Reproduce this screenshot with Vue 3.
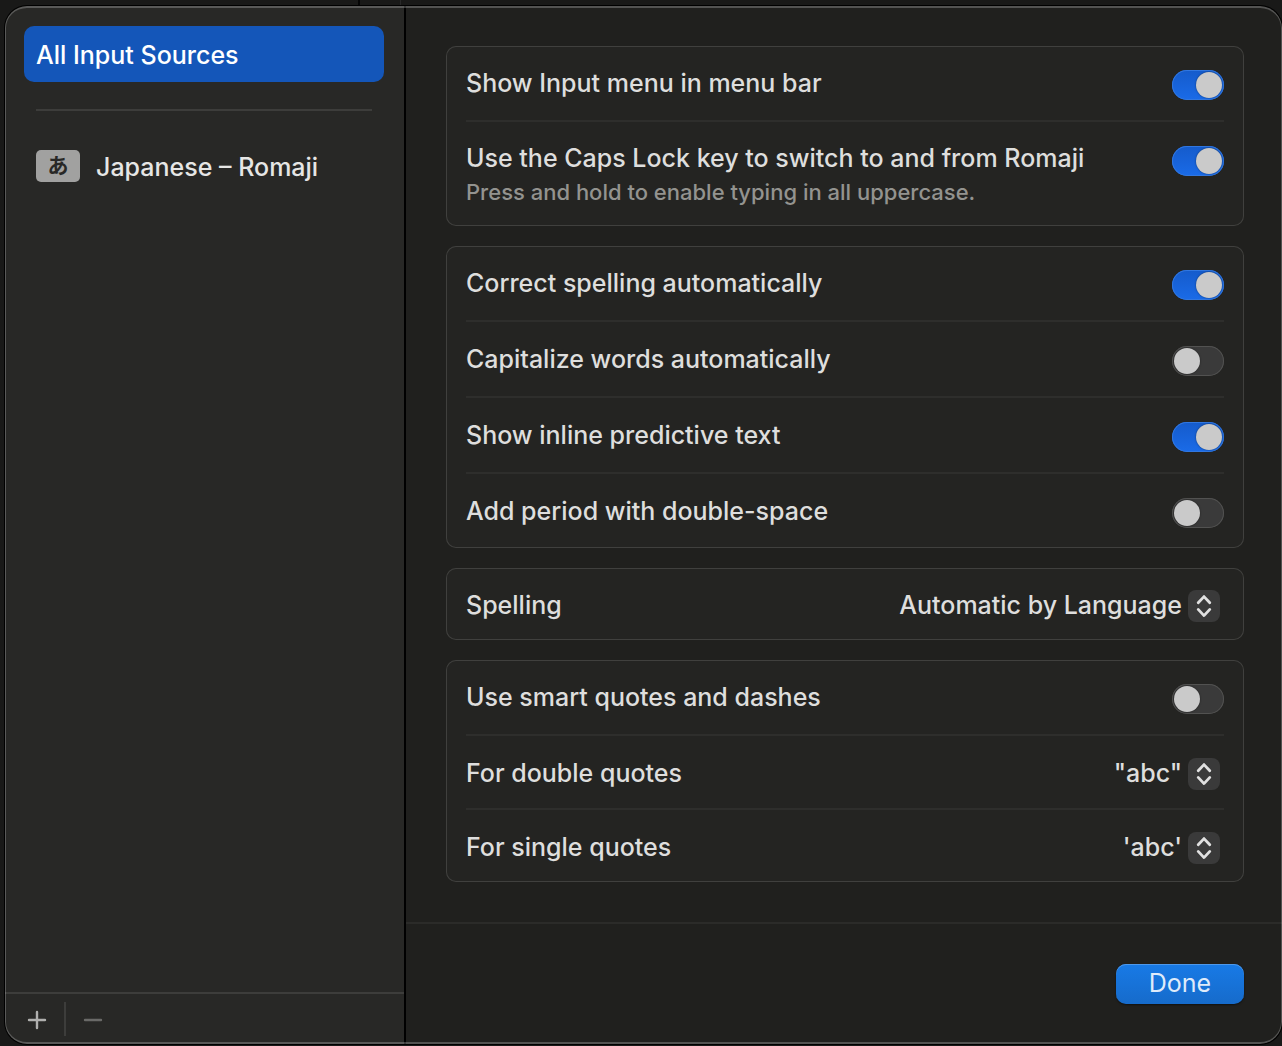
<script setup>
import { reactive } from 'vue'

const sections = reactive([
  [
    { id: 'input-menu', label: 'Show Input menu in menu bar', on: true },
    {
      id: 'caps-lock',
      label: 'Use the Caps Lock key to switch to and from Romaji',
      note: 'Press and hold to enable typing in all uppercase.',
      on: true,
    },
  ],
  [
    { id: 'correct', label: 'Correct spelling automatically', on: true },
    { id: 'capitalize', label: 'Capitalize words automatically', on: false },
    { id: 'predictive', label: 'Show inline predictive text', on: true },
    { id: 'period', label: 'Add period with double-space', on: false },
  ],
  [{ id: 'spelling', label: 'Spelling', value: 'Automatic by Language' }],
  [
    { id: 'smart', label: 'Use smart quotes and dashes', on: false },
    { id: 'double', label: 'For double quotes', value: '"abc"' },
    { id: 'single', label: 'For single quotes', value: "'abc'" },
  ],
])
</script>

<template>
  <div class="desktop">
    <div class="sheet">
      <aside class="sidebar">
        <nav class="sources">
          <a href="#all" class="source selected">
            <span class="name">All Input Sources</span>
          </a>
          <hr class="divider" />
          <a href="#romaji" class="source">
            <span class="badge" lang="ja">あ</span>
            <span class="name">Japanese – Romaji</span>
          </a>
        </nav>
        <div class="tools">
          <button type="button" class="tool" aria-label="Add input source">
            <svg width="20" height="20" viewBox="0 0 20 20">
              <path d="M10 2v16M2 10h16" />
            </svg>
          </button>
          <span class="tool-divider"></span>
          <button type="button" class="tool" aria-label="Remove input source" disabled>
            <svg width="20" height="20" viewBox="0 0 20 20">
              <path d="M2 10h16" />
            </svg>
          </button>
        </div>
      </aside>

      <main class="main">
        <div class="settings">
          <section v-for="(rows, i) in sections" :key="i" class="card">
            <div
              v-for="row in rows"
              :key="row.id"
              class="row"
              :class="{ choice: row.value, noted: row.note }"
            >
              <div class="text">
                <label :for="row.id">{{ row.label }}</label>
                <p v-if="row.note" class="note">{{ row.note }}</p>
              </div>
              <div v-if="row.value" class="popup">
                <select :id="row.id">
                  <option>{{ row.value }}</option>
                </select>
                <svg class="arrows" width="32" height="32" viewBox="0 0 32 32">
                  <path d="M10.2 12.8 16 6.6l5.8 6.2M10.2 19.4 16 25.6l5.8-6.2" />
                </svg>
              </div>
              <input v-else :id="row.id" v-model="row.on" type="checkbox" role="switch" class="switch" />
            </div>
          </section>
        </div>
        <footer class="footer">
          <button type="button" class="done">Done</button>
        </footer>
      </main>
    </div>
  </div>
</template>

<style>
body {
  margin: 0;
  background: #191918;
}
</style>

<style scoped>
* {
  box-sizing: border-box;
}

.desktop {
  min-height: 100vh;
  padding: 6px 0 2px 5px;
  display: flex;
  background:
    linear-gradient(#050505, #050505) 358px 0 / 2px 6px no-repeat,
    linear-gradient(#292929, #292929) 400px 0 / 1px 6px no-repeat,
    #191918;
  color: #dededd;
  font: 500 25px/32px Inter, "Noto Sans CJK JP", sans-serif;
}

.sheet {
  position: relative;
  flex: 1;
  display: flex;
  overflow: hidden;
  border-radius: 22px;
  background: #20201e;
  box-shadow: 0 0 0 1px #000;
}

/* Rim light drawn above both panes */
.sheet::after {
  content: "";
  position: absolute;
  inset: 0;
  border: 2px solid rgba(255, 255, 255, 0.23);
  border-left-width: 1px;
  border-right-width: 1px;
  border-radius: 22px;
  pointer-events: none;
}

.sidebar {
  flex: none;
  width: 401px;
  display: flex;
  flex-direction: column;
  background: #282826;
  border-right: 2px solid #000;
}

.sources {
  flex: 1;
  padding: 20px 20px 20px 19px;
}

.source {
  display: flex;
  align-items: center;
  gap: 16px;
  height: 56px;
  padding: 0 12px;
  border-radius: 10px;
  color: #e6e6e5;
  text-decoration: none;
}

.selected {
  background: #1456b9;
  color: #fff;
}

.name {
  padding-top: 2px;
}

.divider {
  height: 2px;
  margin: 27px 12px;
  border: 0;
  background: #3d3d3b;
}

.badge {
  width: 44px;
  height: 32px;
  border-radius: 5px;
  background: #a1a1a0;
  color: #282826;
  font: 700 21px/28px "Noto Sans CJK JP", sans-serif;
  text-align: center;
}

.tools {
  display: flex;
  align-items: center;
  height: 52px;
  padding-bottom: 1px;
  border-top: 2px solid #3d3d3b;
}

.tool {
  display: flex;
  padding: 9px 22px 7px;
  border: 0;
  background: none;
}

.tool:first-child {
  padding-right: 17px;
}

.tool:last-child {
  padding-left: 17px;
}

.tool path {
  fill: none;
  stroke: #b0b0ae;
  stroke-width: 2.4;
  stroke-linecap: round;
}

.tool:disabled path {
  stroke: #6a6a68;
}

.tool-divider {
  width: 2px;
  height: 34px;
  background: #3d3d3b;
}

.main {
  flex: 1;
  min-width: 0;
  display: flex;
  flex-direction: column;
}

.settings {
  flex: 1;
  display: flex;
  flex-direction: column;
  gap: 20px;
  padding: 40px 38px 40px 40px;
}

.card {
  padding: 0 20px;
  border-radius: 10px;
  background: #242422;
  box-shadow: inset 0 0 0 1px #40403e;
}

.row {
  display: flex;
  align-items: center;
  justify-content: space-between;
  gap: 16px;
  height: 74px;
}

.choice {
  height: 72px;
  padding-top: 2px;
}

.noted {
  height: auto;
  align-items: flex-start;
  padding: 20px 0 18px;
}

.row + .row {
  border-top: 2px solid #2e2e2c;
}

.row + .row:not(.noted) {
  height: 76px;
}

.row + .choice:not(.noted) {
  height: 74px;
}

.note {
  margin: 2px 0 0;
  color: #93938f;
  font-size: 22px;
}

.switch {
  flex: none;
  appearance: none;
  width: 52px;
  height: 30px;
  margin: 4px 0 0;
  padding: 2px;
  border-radius: 15px;
  background: #3a3a3a;
  box-shadow: inset 0 0 0 1px #525251;
}

.switch::before {
  content: "";
  display: block;
  width: 26px;
  height: 26px;
  border-radius: 50%;
  background: #cacaca;
  box-shadow: 0 0 2px rgba(0, 0, 0, 0.5);
}

.switch:checked {
  padding-left: 24px;
  background: linear-gradient(#155bcb, #1a6be8);
  box-shadow: inset 0 0 0 1px #3177e0;
}

.popup {
  position: relative;
  flex: none;
  margin-right: 4px;
}

.popup select {
  display: block;
  appearance: none;
  height: 32px;
  margin: 0;
  padding: 0 38px 0 0;
  border: 0;
  background: none;
  color: inherit;
  font: inherit;
  text-align-last: right;
}

.arrows {
  position: absolute;
  top: 1px;
  right: 0;
  border-radius: 8px;
  background: #3a3a3a;
  pointer-events: none;
}

.arrows path {
  fill: none;
  stroke: #e0e0e0;
  stroke-width: 2.8;
  stroke-linecap: round;
  stroke-linejoin: round;
}

.footer {
  display: flex;
  justify-content: flex-end;
  padding: 40px 38px;
  border-top: 2px solid #2b2b29;
}

.done {
  width: 128px;
  height: 40px;
  padding: 0 0 2px;
  border: 0;
  border-radius: 10px;
  background: linear-gradient(#187ae6, #166bcb);
  box-shadow: inset 0 1px 0 #4e98ea, 0 1px 2px rgba(0, 0, 0, 0.5);
  color: #dfebfa;
  font: inherit;
  font-weight: 400;
}
</style>
